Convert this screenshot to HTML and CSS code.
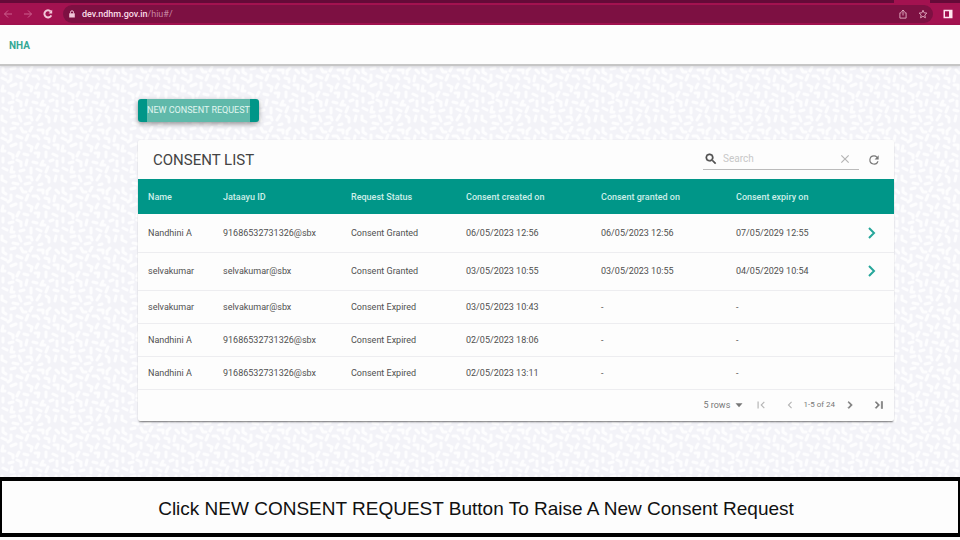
FILE: index.html
```html
<!DOCTYPE html>
<html lang="en">
<head>
<meta charset="utf-8">
<title>Consent List</title>
<link rel="stylesheet" href="styles.css">
</head>
<body>
<div class="browser">
  <div class="tabstrip"><span class="tab"></span></div>
  <div class="toolbar">
    <button class="tool dim" aria-label="Back"><svg viewBox="0 0 10 10"><path d="M9 5H1.500M5 1.500L1.500 5 5 8.500"/></svg></button>
    <button class="tool dim" aria-label="Forward"><svg viewBox="0 0 10 10"><path d="M1 5h7.500M5 1.500L8.500 5 5 8.500"/></svg></button>
    <button class="tool" aria-label="Reload"><svg viewBox="0 0 10 10"><path class="heavy" d="M8.300 6.300A3.600 3.600 0 1 1 7.700 2.500"/><path class="solid" d="M9.200.8v3.700H5.500z"/></svg></button>
    <div class="address">
      <svg class="lock" viewBox="0 0 8 8"><path class="solid" d="M1.200 3.300h5.600v4.200H1.200z"/><path d="M2.500 3.500V2.300a1.500 1.500 0 0 1 3 0v1.200"/></svg>
      <span class="url"><b>dev.ndhm.gov.in</b>/hiu#/</span>
      <button class="tool pale" aria-label="Share"><svg viewBox="0 0 10 10"><path d="M3.500 3.800H1.900v5.300h6.200V3.800H6.500M5 6.500V1M3.300 2.700L5 1l1.700 1.700"/></svg></button>
      <button class="tool pale" aria-label="Bookmark"><svg viewBox="0 0 10 10"><path d="M5 1.200l1.100 2.600 2.800.3-2.100 1.900.6 2.800L5 7.300 2.600 8.800l.6-2.800L1.100 4.100l2.800-.3z"/></svg></button>
    </div>
    <button class="tool panel" aria-label="Side panel"><svg viewBox="0 0 10 10"><path class="solid" fill-rule="evenodd" d="M.5.8h9v8.400h-9zM2 2.300v5.400h4V2.300z"/></svg></button>
  </div>
</div>
<header class="appbar"><a href="#/">NHA</a></header>
<main>
  <button class="new-request"><span>NEW CONSENT REQUEST</span></button>
  <section class="card">
    <div class="card-head">
      <h1>CONSENT LIST</h1>
      <label class="search">
        <svg class="icon strong" viewBox="0 0 24 24"><path d="M15.500 14h-.79l-.28-.27A6.471 6.471 0 0 0 16 9.500 6.500 6.500 0 1 0 9.500 16c1.610 0 3.090-.59 4.230-1.570l.27.28v.79l5 4.990L20.490 19l-4.990-5zm-6 0C7.010 14 5 11.990 5 9.500S7.010 5 9.500 5 14 7.010 14 9.500 11.990 14 9.500 14z"/></svg>
        <input type="text" placeholder="Search" aria-label="Search">
        <button class="icon-btn faint" aria-label="Clear search"><svg class="icon" viewBox="0 0 24 24"><path d="M19 6.410L17.590 5 12 10.590 6.410 5 5 6.410 10.590 12 5 17.590 6.410 19 12 13.410 17.590 19 19 17.590 13.410 12z"/></svg></button>
      </label>
      <button class="icon-btn refresh" aria-label="Refresh"><svg class="icon" viewBox="0 0 24 24"><path d="M17.650 6.350A7.958 7.958 0 0 0 12 4a8 8 0 1 0 7.730 10h-2.080A6 6 0 1 1 12 6c1.660 0 3.140.69 4.220 1.780L13 11h7V4l-2.350 2.350z"/></svg></button>
    </div>
    <table>
      <colgroup><col class="c-name"><col class="c-id"><col class="c-status"><col class="c-date"><col class="c-date"><col class="c-expiry"><col></colgroup>
      <thead><tr><th>Name</th><th>Jataayu ID</th><th>Request Status</th><th>Consent created on</th><th>Consent granted on</th><th>Consent expiry on</th><th></th></tr></thead>
      <tbody>
        <tr class="granted"><td>Nandhini A</td><td>91686532731326@sbx</td><td>Consent Granted</td><td>06/05/2023 12:56</td><td>06/05/2023 12:56</td><td>07/05/2029 12:55</td><td class="go"><button class="icon-btn open" aria-label="Open consent"><svg viewBox="0 0 10 14"><path d="M2 2l5 5-5 5"/></svg></button></td></tr>
        <tr class="granted"><td>selvakumar</td><td>selvakumar@sbx</td><td>Consent Granted</td><td>03/05/2023 10:55</td><td>03/05/2023 10:55</td><td>04/05/2029 10:54</td><td class="go"><button class="icon-btn open" aria-label="Open consent"><svg viewBox="0 0 10 14"><path d="M2 2l5 5-5 5"/></svg></button></td></tr>
        <tr><td>selvakumar</td><td>selvakumar@sbx</td><td>Consent Expired</td><td>03/05/2023 10:43</td><td>-</td><td>-</td><td></td></tr>
        <tr><td>Nandhini A</td><td>91686532731326@sbx</td><td>Consent Expired</td><td>02/05/2023 18:06</td><td>-</td><td>-</td><td></td></tr>
        <tr><td>Nandhini A</td><td>91686532731326@sbx</td><td>Consent Expired</td><td>02/05/2023 13:11</td><td>-</td><td>-</td><td></td></tr>
      </tbody>
    </table>
    <div class="pager">
      <div class="rows"><select aria-label="Rows per page"><option>5 rows</option></select><svg class="icon" viewBox="0 0 24 24"><path d="M6 9l6 7 6-7z"/></svg></div>
      <button class="icon-btn faint" aria-label="First page"><svg class="icon" viewBox="0 0 24 24"><path d="M18.410 16.590L13.820 12l4.590-4.590L17 6l-6 6 6 6zM6 6h2v12H6z"/></svg></button>
      <button class="icon-btn faint prev" aria-label="Previous page"><svg class="icon" viewBox="0 0 24 24"><path d="M15.410 7.410L14 6l-6 6 6 6 1.410-1.410L10.830 12z"/></svg></button>
      <span class="range">1-5 of 24</span>
      <button class="icon-btn" aria-label="Next page"><svg class="icon strong" viewBox="0 0 24 24"><path d="M10 6L8.590 7.410 13.170 12l-4.580 4.590L10 18l6-6z"/></svg></button>
      <button class="icon-btn last" aria-label="Last page"><svg class="icon strong" viewBox="0 0 24 24"><path d="M5.590 7.410L10.180 12l-4.590 4.590L7 18l6-6-6-6zM16 6h2v12h-2z"/></svg></button>
    </div>
  </section>
</main>
<footer class="caption">Click NEW CONSENT REQUEST Button To Raise A New Consent Request</footer>
</body>
</html>
```
FILE: styles.css
```css
* { box-sizing: border-box; }

body {
  margin: 0;
  min-height: 100vh;
  display: flex;
  flex-direction: column;
  background: #fdfdfd;
  color: #505050;
  font: 9px/12px Roboto, sans-serif;
}

button, input, select { font: inherit; color: inherit; }

button {
  padding: 0;
  border: 0;
  background: none;
  display: flex;
  align-items: center;
  justify-content: center;
}

.browser { background: #a31250; color: #f3c7d9; }

.tabstrip { height: 3px; display: flex; justify-content: flex-end; background: #650a38; }
.tab { width: 36px; margin-right: 30px; background: #a31250; }

.toolbar { height: 22px; display: flex; align-items: center; gap: 10px; padding: 0 7px 0 3px; }

.tool svg { width: 10px; height: 10px; fill: none; stroke: currentColor; stroke-width: 1; }
.tool .heavy { stroke-width: 2; }
.solid { fill: currentColor; stroke: none; }
.dim { color: #cc5f8d; }
.pale { color: #dba0b7; }
.panel { color: #ffe6ef; }

.address {
  flex: 1;
  height: 18px;
  display: flex;
  align-items: center;
  gap: 10px;
  padding: 0 5px;
  border-radius: 9px;
  background: #7d1042;
}
.lock { width: 8px; height: 8px; fill: none; stroke: currentColor; }
.url { flex: 1; margin-left: -4px; color: #c788a3; }
.url b { font-weight: 500; color: #fbdde8; }

.appbar {
  height: 41px;
  display: flex;
  align-items: center;
  padding: 2px 9px 0;
  border-bottom: 2px solid #c6c6c6;
  background: #fdfdfd;
  z-index: 1;
  box-shadow: 0 1px 3px #0002;
}
.appbar a { color: #35a895; font-size: 10px; font-weight: 700; text-decoration: none; }

main {
  flex: 1;
  padding: 33px 66px 56px 138px;
  background: #f3f3f8 url("data:image/svg+xml,%3Csvg xmlns='http://www.w3.org/2000/svg' width='60' height='60'%3E%3Cpath fill='none' stroke='%23fdfdfe' stroke-width='3' stroke-linecap='round' stroke-linejoin='round' d='M3 2v4l3 2M11 3l4-1M21 2l2 4h3M32 1l-2 4M38 4h5v3M50 2l-3 3v3M56 4l3 3M2 12l4 2M11 9v5l-3 2M17 10l5 2M28 9l-2 5M33 10h4l2 3M45 12l4 1v3M55 10l-1 5M3 20l-1 5h3M11 20l5-2M21 17v5M28 19l4 2-1 4M38 18l-2 4M44 20l5 2M54 19h4v4M9 27l4 2v3M19 26l-2 4M24 28l4 1M35 27h4l-1 4M46 26v5M53 28l4 2M3 32v4M9 37l4-1M17 34l4 2v4M27 34l-1 5M33 36l4 1M43 35l-2 4h4M50 35l3-1M57 35v5M3 42l4 2M12 41l-1 5h3M20 45l4-1M31 42v5M37 43l4 2M48 41l-2 5M54 44l4 1M2 50v4l4 2M11 51l4-1M19 50l2 5M27 51h4l1 3M40 49l-3 5M46 50l3 2v4M56 50l-1 5M13 57l5 1M25 58l5-1M42 58l-3 1'/%3E%3C/svg%3E");
}

.new-request {
  height: 23px;
  padding: 0 9px;
  border-radius: 3px;
  background: #009688;
  color: #e0f6f1;
  font-weight: 400;
  box-shadow: 0 2px 5px #0006;
}
.new-request span { line-height: 23px; background: #60b9aa; }

.card {
  margin-top: 18px;
  border-radius: 2px;
  background: #fdfdfd;
  box-shadow: 0 2px 2px -1px #0008, 0 0 2px #0001;
}
.card-head { height: 39px; display: flex; align-items: center; padding: 0 13px 0 15px; }
h1 { flex: 1; margin: 0; color: #444; font-size: 15px; font-weight: 400; line-height: 20px; }

.icon { width: 14px; height: 14px; flex: none; fill: currentColor; }
.strong { stroke: currentColor; }
.faint { color: #b5b5b5; }

.search {
  width: 156px;
  height: 20px;
  display: flex;
  align-items: center;
  gap: 5px;
  padding: 0 7px 0 1px;
  border-bottom: 1px solid #bbb;
}
.search input { flex: 1; min-width: 0; padding: 0; border: 0; outline: 0; background: none; font-size: 10px; }
.search input::placeholder { color: #c8c8c8; opacity: 1; }
.refresh { margin-left: 8px; color: #777; }

table { width: 100%; table-layout: fixed; border-collapse: collapse; }
.c-name { width: 75px; }
.c-id { width: 128px; }
.c-status { width: 115px; }
.c-date { width: 135px; }
.c-expiry { width: 136px; }
th { height: 35px; padding: 0 10px; background: #009688; color: #cdeee8; font-weight: 500; text-align: left; white-space: nowrap; }
td { height: 33px; padding: 0 10px; border-bottom: 1px solid #ededf0; white-space: nowrap; }
.granted td { height: 38px; }
.granted .go { padding: 0 3px; }
.go .open { width: 14px; }
.open svg { width: 10px; height: 14px; fill: none; stroke: #26a69a; stroke-width: 2; }

.pager { height: 31px; display: flex; align-items: center; justify-content: flex-end; padding-right: 8px; color: #777; }
.rows { display: flex; align-items: center; margin-right: 8px; }
.rows select { width: 29px; padding: 0; border: 0; appearance: none; background: none; }
.prev { margin-left: 15px; }
.range { margin: 0 8px 0 6px; font-size: 8px; }
.last { margin-left: 15px; }

.caption {
  min-height: 60px;
  margin-bottom: 3px;
  display: flex;
  align-items: center;
  justify-content: center;
  padding: 4px 8px 0 0;
  border: solid #000;
  border-width: 4px 2px;
  background: #fdfdfd;
  color: #111;
  font: 19px/24px "Liberation Sans", sans-serif;
}
```
